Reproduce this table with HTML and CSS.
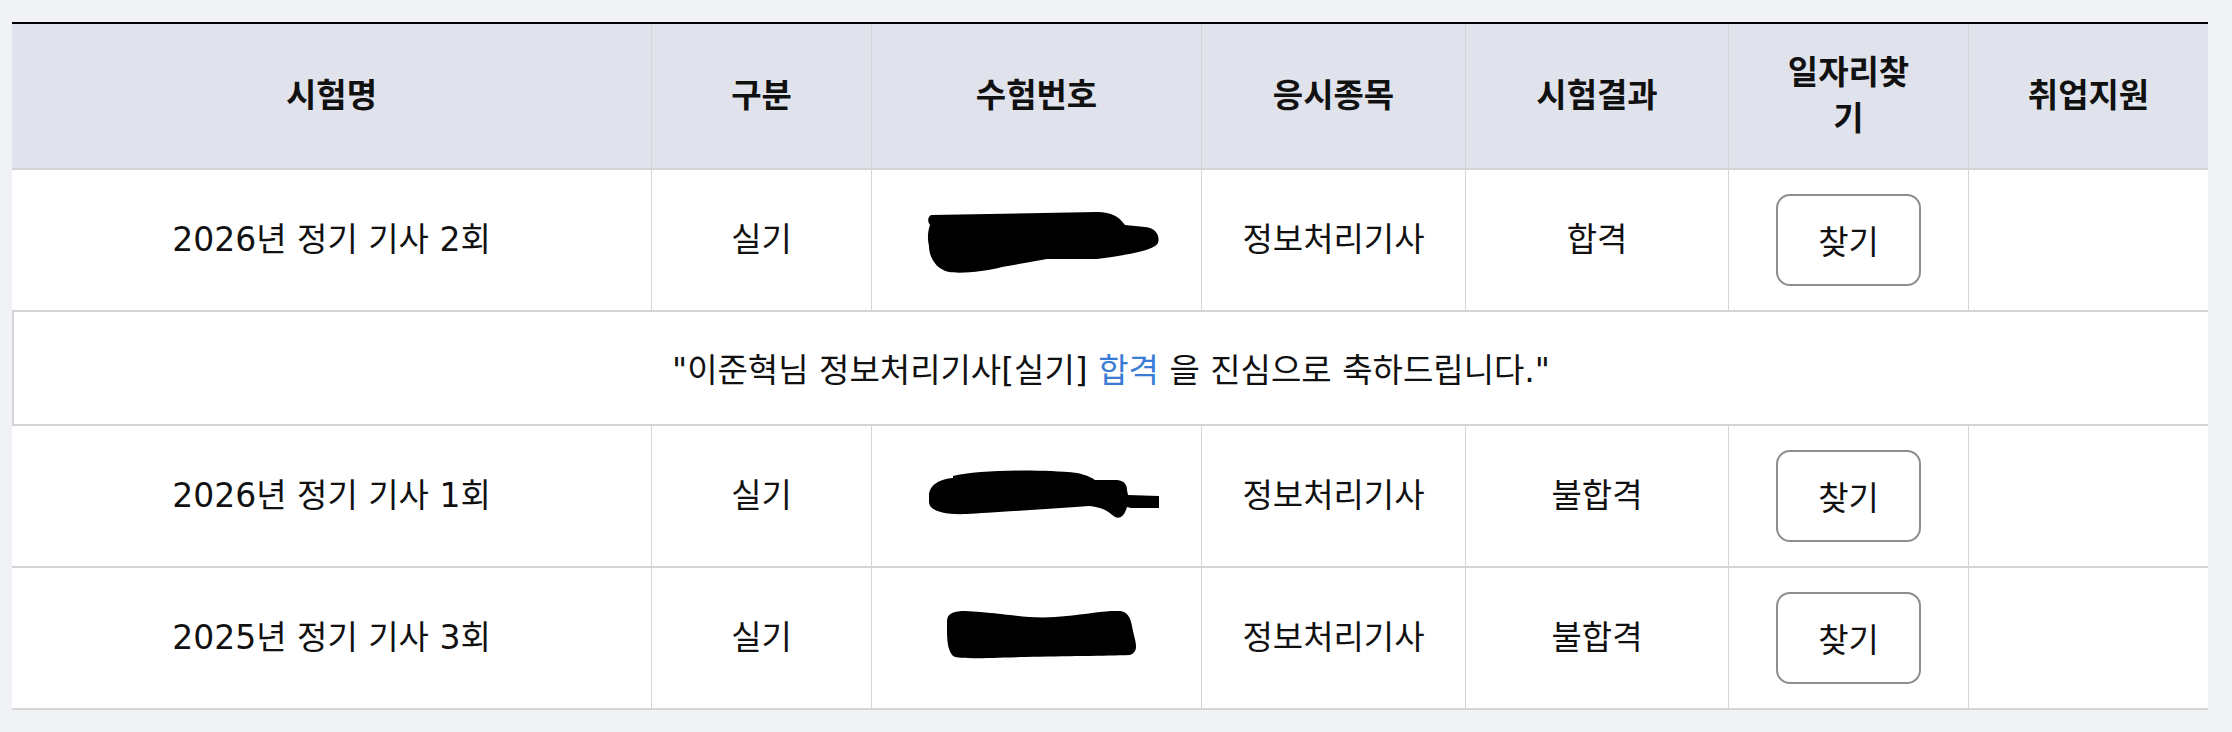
FILE: index.html
```html
<!DOCTYPE html>
<html lang="ko">
<head>
<meta charset="utf-8">
<title>시험 결과</title>
<link rel="stylesheet" href="styles.css">
</head>
<body>
<main class="page">
  <table class="results">
    <colgroup>
      <col class="c-name">
      <col class="c-type">
      <col class="c-num">
      <col class="c-subject">
      <col class="c-result">
      <col class="c-job">
      <col class="c-support">
    </colgroup>
    <thead>
      <tr>
        <th>시험명</th>
        <th>구분</th>
        <th>수험번호</th>
        <th>응시종목</th>
        <th>시험결과</th>
        <th>일자리찾기</th>
        <th>취업지원</th>
      </tr>
    </thead>
    <tbody>
      <tr class="row">
        <td>2026년 정기 기사 2회</td>
        <td>실기</td>
        <td>
          <svg class="redact r1" width="232" height="64" viewBox="0 0 232 64" aria-hidden="true">
            <path d="M4,4 L170,1 C185,1 192,6 198,14 L218,16 C230,17 233,26 231,32 C228,38 210,42 185,46 L170,48 L120,48 L75,56 C60,60 35,63 22,61 C8,58 2,45 2,35 C0,27 1,20 3,14 C0,10 1,6 4,4 Z" fill="#000"/>
          </svg>
        </td>
        <td>정보처리기사</td>
        <td>합격</td>
        <td><button class="find-btn" type="button">찾기</button></td>
        <td></td>
      </tr>
      <tr class="message">
        <td colspan="7">"이준혁님 정보처리기사[실기] <span class="pass">합격</span> 을 진심으로 축하드립니다."</td>
      </tr>
      <tr class="row">
        <td>2026년 정기 기사 1회</td>
        <td>실기</td>
        <td>
          <svg class="redact r2" width="232" height="50" viewBox="0 0 232 50" aria-hidden="true">
            <path d="M2,26 C2,14 14,9 26,8 L26,6 C50,0 110,-1 150,3 C160,5 165,8 168,10 L190,10 C198,11 200,15 200,20 L201,25 L232,26 L232,38 L204,38 L200,37 C198,44 194,50 188,47 C182,43 180,38 162,36 C120,39 60,43 40,44 C14,45 2,40 2,32 Z" fill="#000"/>
          </svg>
        </td>
        <td>정보처리기사</td>
        <td>불합격</td>
        <td><button class="find-btn" type="button">찾기</button></td>
        <td></td>
      </tr>
      <tr class="row">
        <td>2025년 정기 기사 3회</td>
        <td>실기</td>
        <td>
          <svg class="redact r3" width="192" height="48" viewBox="0 0 192 48" aria-hidden="true">
            <path d="M2,10 C2,2 10,0 20,0 C60,2 80,8 110,6 C140,4 160,-1 175,0 C185,1 186,10 188,20 C190,30 195,40 185,44 C160,45 120,45 80,46 C40,47 20,48 10,46 C3,43 2,30 2,20 Z" fill="#000"/>
          </svg>
        </td>
        <td>정보처리기사</td>
        <td>불합격</td>
        <td><button class="find-btn" type="button">찾기</button></td>
        <td></td>
      </tr>
    </tbody>
  </table>
</main>
</body>
</html>
```

FILE: styles.css
```css
html, body {
  margin: 0;
  padding: 0;
  background: #f1f2f6;
}

.page {
  padding: 22px 0 0 12px;
}

.results {
  width: 2196px;
  table-layout: fixed;
  border-collapse: separate;
  border-spacing: 0;
  border-top: 2px solid #000;
  font-family: "DejaVu Sans", "Noto Sans CJK KR", sans-serif;
  font-size: 33px;
  color: #111;
  background: #fff;
}

.c-name { width: 640px; }
.c-type { width: 220px; }
.c-num { width: 330px; }
.c-subject { width: 264px; }
.c-result { width: 263px; }
.c-job { width: 240px; }
.c-support { width: 239px; }

.results th,
.results td {
  box-sizing: border-box;
  padding: 0;
  text-align: center;
  vertical-align: middle;
  border-right: 1px solid #d4d4d4;
  border-bottom: 2px solid #d4d4d4;
}

.results th:last-child,
.results td:last-child {
  border-right: 0;
}

.results th {
  height: 146px;
  padding: 0 48px;
  background: #e0e3ec;
  font-weight: 700;
  line-height: 1.4;
}

.row td {
  height: 142px;
  line-height: 1.4;
}

.message td {
  height: 114px;
  border-left: 2px solid #d4d4d4;
  border-right: 0;
}

.pass {
  color: #3a7bd6;
}

.redact {
  display: block;
  margin: 0 auto;
}

.r1 { transform: translate(6px, 3px); }
.r2 { transform: translate(6px, -1px); }
.r3 { transform: translate(4px, -3px); }

.find-btn {
  box-sizing: border-box;
  width: 145px;
  height: 92px;
  border: 2px solid #8e8e8e;
  border-radius: 14px;
  background: #fff;
  font-family: inherit;
  font-size: 33px;
  color: #111;
  cursor: pointer;
}
```
